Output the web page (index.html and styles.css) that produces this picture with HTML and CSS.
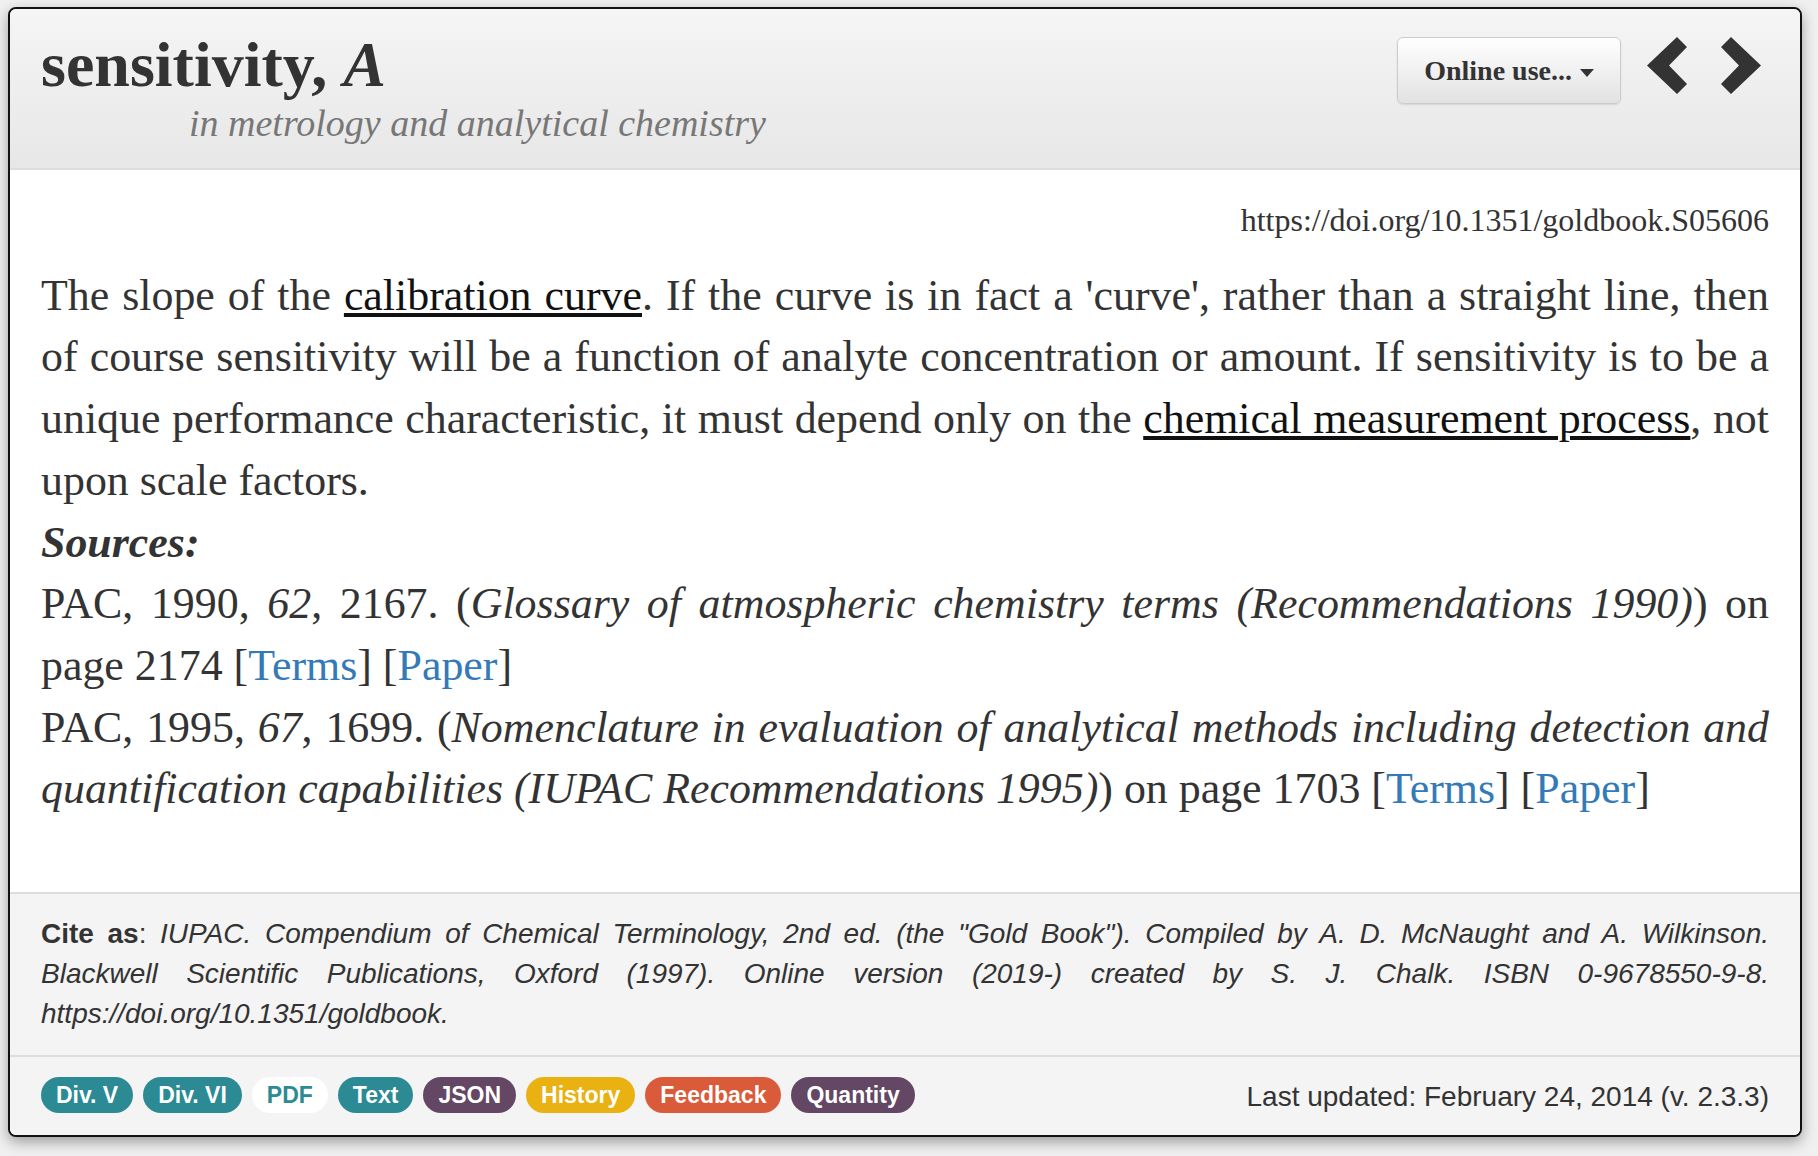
FILE: index.html
```html
<!DOCTYPE html>
<html lang="en">
<head>
  <meta charset="UTF-8" />
  <title>sensitivity, A - IUPAC Gold Book</title>
  <link rel="stylesheet" href="styles.css">
</head>
<body>

  <div class="entry">
    <!-- Term header -->
    <div class="entry-head">
      <div class="title-block">
        <h1 class="term">sensitivity, <i>A</i></h1>
        <div class="context">in metrology and analytical chemistry</div>
      </div>
      <div class="head-tools">
        <button class="btn-online">Online use... <span class="caret"></span></button>
        <a class="nav-arrow" href="#" title="Previous">
          <svg width="40" height="57" viewBox="0 0 40 57">
            <polygon points="0,28.5 30,0 40,10 22,28.5 40,47 30,57" fill="#333"/>
          </svg>
        </a>
        <a class="nav-arrow" href="#" title="Next">
          <svg width="40" height="57" viewBox="0 0 40 57">
            <polygon points="40,28.5 10,0 0,10 18,28.5 0,47 10,57" fill="#333"/>
          </svg>
        </a>
      </div>
    </div>

    <!-- Definition -->
    <div class="entry-body">
      <div class="doi">https://doi.org/10.1351/goldbook.S05606</div>
      <p class="definition">
        The slope of the <a class="term-link" href="#">calibration curve</a>. If the curve is in fact a 'curve', rather than a straight line, then of course sensitivity will be a function of analyte concentration or amount. If sensitivity is to be a unique performance characteristic, it must depend only on the <a class="term-link" href="#">chemical measurement process</a>, not upon scale factors.
      </p>
      <div class="sources">
        <div class="sources-title">Sources:</div>
        <div class="source">PAC, 1990, <i>62</i>, 2167. (<i>Glossary of atmospheric chemistry terms (Recommendations 1990)</i>) on page 2174 [<a href="#">Terms</a>] [<a href="#">Paper</a>]</div>
        <div class="source">PAC, 1995, <i>67</i>, 1699. (<i>Nomenclature in evaluation of analytical methods including detection and quantification capabilities (IUPAC Recommendations 1995)</i>) on page 1703 [<a href="#">Terms</a>] [<a href="#">Paper</a>]</div>
      </div>
    </div>

    <!-- Citation -->
    <div class="entry-cite">
      <b>Cite as</b>: <i>IUPAC. Compendium of Chemical Terminology, 2nd ed. (the "Gold Book"). Compiled by A. D. McNaught and A. Wilkinson. Blackwell Scientific Publications, Oxford (1997). Online version (2019-) created by S. J. Chalk. ISBN 0-9678550-9-8. https://doi.org/10.1351/goldbook.</i>
    </div>

    <!-- Footer -->
    <div class="entry-foot">
      <div class="badges">
        <a class="badge teal" href="#">Div. V</a>
        <a class="badge teal" href="#">Div. VI</a>
        <a class="badge plain" href="#">PDF</a>
        <a class="badge teal" href="#">Text</a>
        <a class="badge plum" href="#">JSON</a>
        <a class="badge gold" href="#">History</a>
        <a class="badge red" href="#">Feedback</a>
        <a class="badge plum" href="#">Quantity</a>
      </div>
      <div class="updated">Last updated: February 24, 2014 (v. 2.3.3)</div>
    </div>
  </div>

</body>
</html>
```

FILE: styles.css
```css
* { box-sizing: border-box; }

body {
  margin: 0;
  padding: 7px 16px 20px 8px;
  background: #f0f0f0;
  color: #333;
  font-family: 'Liberation Serif', 'Times New Roman', serif;
}

.entry {
  background: #fff;
  border: 2px solid #111;
  border-radius: 8px;
  box-shadow: 0 5px 14px rgba(0, 0, 0, 0.35);
  overflow: hidden;
}

/* header */
.entry-head {
  display: flex;
  justify-content: space-between;
  align-items: flex-start;
  padding: 21px 31px 22px;
  background: linear-gradient(#f5f5f5, #e7e7e7);
  border-bottom: 2px solid #ddd;
}

.term {
  margin: 0;
  font-size: 64px;
  line-height: 70px;
  font-weight: bold;
  color: #333;
}

.context {
  margin-left: 148px;
  font-size: 38px;
  line-height: 46px;
  font-style: italic;
  color: #777;
}

.head-tools {
  display: flex;
  align-items: flex-start;
  margin-top: 7px;
  margin-right: 8px;
}

.btn-online {
  height: 67px;
  padding: 0 26px;
  font-family: 'Liberation Serif', 'Times New Roman', serif;
  font-size: 28px;
  font-weight: bold;
  color: #333;
  background: linear-gradient(#fff, #e2e2e2);
  border: 1px solid #ccc;
  border-radius: 6px;
  box-shadow: 0 1px 2px rgba(0, 0, 0, 0.1);
  display: flex;
  align-items: center;
  cursor: pointer;
}

.caret {
  display: inline-block;
  margin-left: 8px;
  margin-top: 4px;
  border-top: 8px solid #333;
  border-left: 7px solid transparent;
  border-right: 7px solid transparent;
}

.nav-arrow {
  display: block;
  line-height: 0;
  margin-left: 26px;
}

.nav-arrow + .nav-arrow { margin-left: 34px; }

/* body */
.entry-body {
  padding: 28px 31px 72px;
  font-size: 43.9px;
  line-height: 61.7px;
}

.doi {
  text-align: right;
  font-size: 32px;
  line-height: 45.7px;
  margin-bottom: 21px;
}

.definition {
  margin: 0;
  text-align: justify;
}

.term-link {
  color: #111;
  text-decoration: underline;
}

.sources { text-align: justify; }

.sources-title {
  font-weight: bold;
  font-style: italic;
}

.sources a {
  color: #337ab7;
  text-decoration: none;
}

/* citation + footer */
.entry-cite {
  background: #f4f4f4;
  border-top: 2px solid #ddd;
  padding: 20px 31px 21px;
  font-family: 'Liberation Sans', Helvetica, Arial, sans-serif;
  font-size: 28px;
  line-height: 40px;
  text-align: justify;
}

.entry-foot {
  background: #f4f4f4;
  border-top: 2px solid #ddd;
  padding: 20px 31px 22px;
  display: flex;
  justify-content: space-between;
  align-items: center;
  font-family: 'Liberation Sans', Helvetica, Arial, sans-serif;
}

.badges {
  display: flex;
  gap: 10px;
}

.badge {
  display: block;
  height: 36px;
  line-height: 36px;
  padding: 0 15px;
  border-radius: 18px;
  font-size: 23px;
  font-weight: bold;
  color: #fff;
  text-decoration: none;
}

.badge.teal { background: #2b8a93; }
.badge.plain { background: #fff; color: #2b8a93; }
.badge.plum { background: #634764; }
.badge.gold { background: #e9b112; }
.badge.red { background: #da5b39; }

.updated {
  font-size: 28px;
  margin-top: 4px;
}
```
